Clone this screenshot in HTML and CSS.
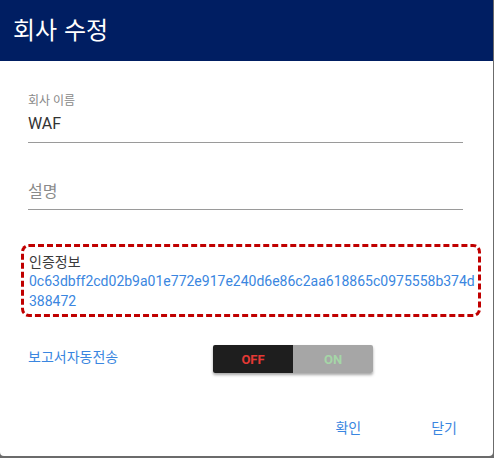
FILE: index.html
```html
<!DOCTYPE html>
<html lang="ko">
<head>
<meta charset="utf-8">
<link rel="stylesheet" href="styles.css">
</head>
<body>
<div class="dialog">
  <div class="header"><h1 class="title">회사 수정</h1></div>
  <div class="content">
    <div class="field">
      <div class="label">회사 이름</div>
      <div class="value">WAF</div>
    </div>
    <div class="field field-empty">
      <div class="placeholder">설명</div>
    </div>
    <div class="auth-box">
      <div class="auth-label">인증정보</div>
      <div class="auth-value">0c63dbff2cd02b9a01e772e917e240d6e86c2aa618865c0975558b374d388472</div>
    </div>
    <div class="report-row">
      <div class="report-label">보고서자동전송</div>
      <div class="toggle">
        <div class="toggle-off">OFF</div>
        <div class="toggle-on">ON</div>
      </div>
    </div>
  </div>
  <div class="actions">
    <button class="btn btn-ok">확인</button>
    <button class="btn btn-close">닫기</button>
  </div>
</div>
</body>
</html>
```
FILE: styles.css
```css
html, body {
  margin: 0;
  padding: 0;
}
body {
  background: #6b6b6b;
  width: 494px;
  height: 458px;
  overflow: hidden;
  font-family: Roboto, "Noto Sans CJK KR", sans-serif;
}
.dialog {
  width: 493px;
  height: 456px;
  background: #fff;
  border-radius: 0 0 4px 4px;
  display: flex;
  flex-direction: column;
  overflow: hidden;
}
.header {
  background: #001e62;
  height: 61px;
  padding: 0 13px;
  display: flex;
  align-items: center;
}
.title {
  margin: 0;
  color: #fff;
  font-size: 24px;
  font-weight: 400;
  font-family: "Noto Sans CJK KR", Roboto, sans-serif;
  line-height: 1;
  padding-bottom: 4px;
}
.content {
  padding: 30px 30px 0 28px;
  display: flex;
  flex-direction: column;
}
.field {
  border-bottom: 1px solid #9a9a9a;
  display: flex;
  flex-direction: column;
}
.label {
  font-size: 12px;
  color: #888;
  line-height: 14px;
  margin-top: 3px;
}
.value {
  font-size: 16px;
  color: #333;
  line-height: 20px;
  margin-top: 6px;
  padding-bottom: 8px;
}
.field-empty {
  margin-top: 25px;
}
.placeholder {
  font-size: 16px;
  color: #8a8a8a;
  line-height: 20px;
  margin-top: 12px;
  padding-bottom: 9px;
  font-family: "Noto Sans CJK KR", sans-serif;
}
.auth-box {
  margin: 34px -18px 0 -7px;
  border: 3px dashed #c00000;
  border-radius: 8px;
  padding: 4px 0 4px 5px;
  box-sizing: border-box;
  height: 73px;
}
.auth-label {
  font-size: 14px;
  color: #3a3a3a;
  line-height: 20px;
  font-family: "Noto Sans CJK KR", sans-serif;
}
.auth-value {
  font-size: 14px;
  color: #3a86e0;
  line-height: 20px;
  word-break: break-all;
}
.report-row {
  margin-top: 28px;
  display: flex;
  align-items: flex-start;
}
.report-label {
  width: 185px;
  font-size: 14px;
  color: #3a86e0;
  line-height: 18px;
  padding-top: 2px;
  font-family: "Noto Sans CJK KR", sans-serif;
}
.toggle {
  display: flex;
  width: 160px;
  height: 28px;
  border-radius: 2px;
  overflow: hidden;
  box-shadow: 0 2px 3px rgba(0,0,0,0.35);
}
.toggle-off, .toggle-on {
  flex: 1;
  display: flex;
  align-items: center;
  justify-content: center;
  font-size: 13px;
  font-weight: 700;
}
.toggle-off {
  background: #1e1e1e;
  color: #e53935;
}
.toggle-on {
  background: #a6a6a6;
  color: #a5d6a7;
}
.actions {
  margin-top: auto;
  display: flex;
  justify-content: flex-end;
  padding: 0 28px 19px 0;
  gap: 54px;
}
.btn {
  background: none;
  border: none;
  padding: 0 8px;
  font-size: 14px;
  color: #3a86e0;
  font-family: "Noto Sans CJK KR", sans-serif;
  line-height: 20px;
  cursor: pointer;
}
```
